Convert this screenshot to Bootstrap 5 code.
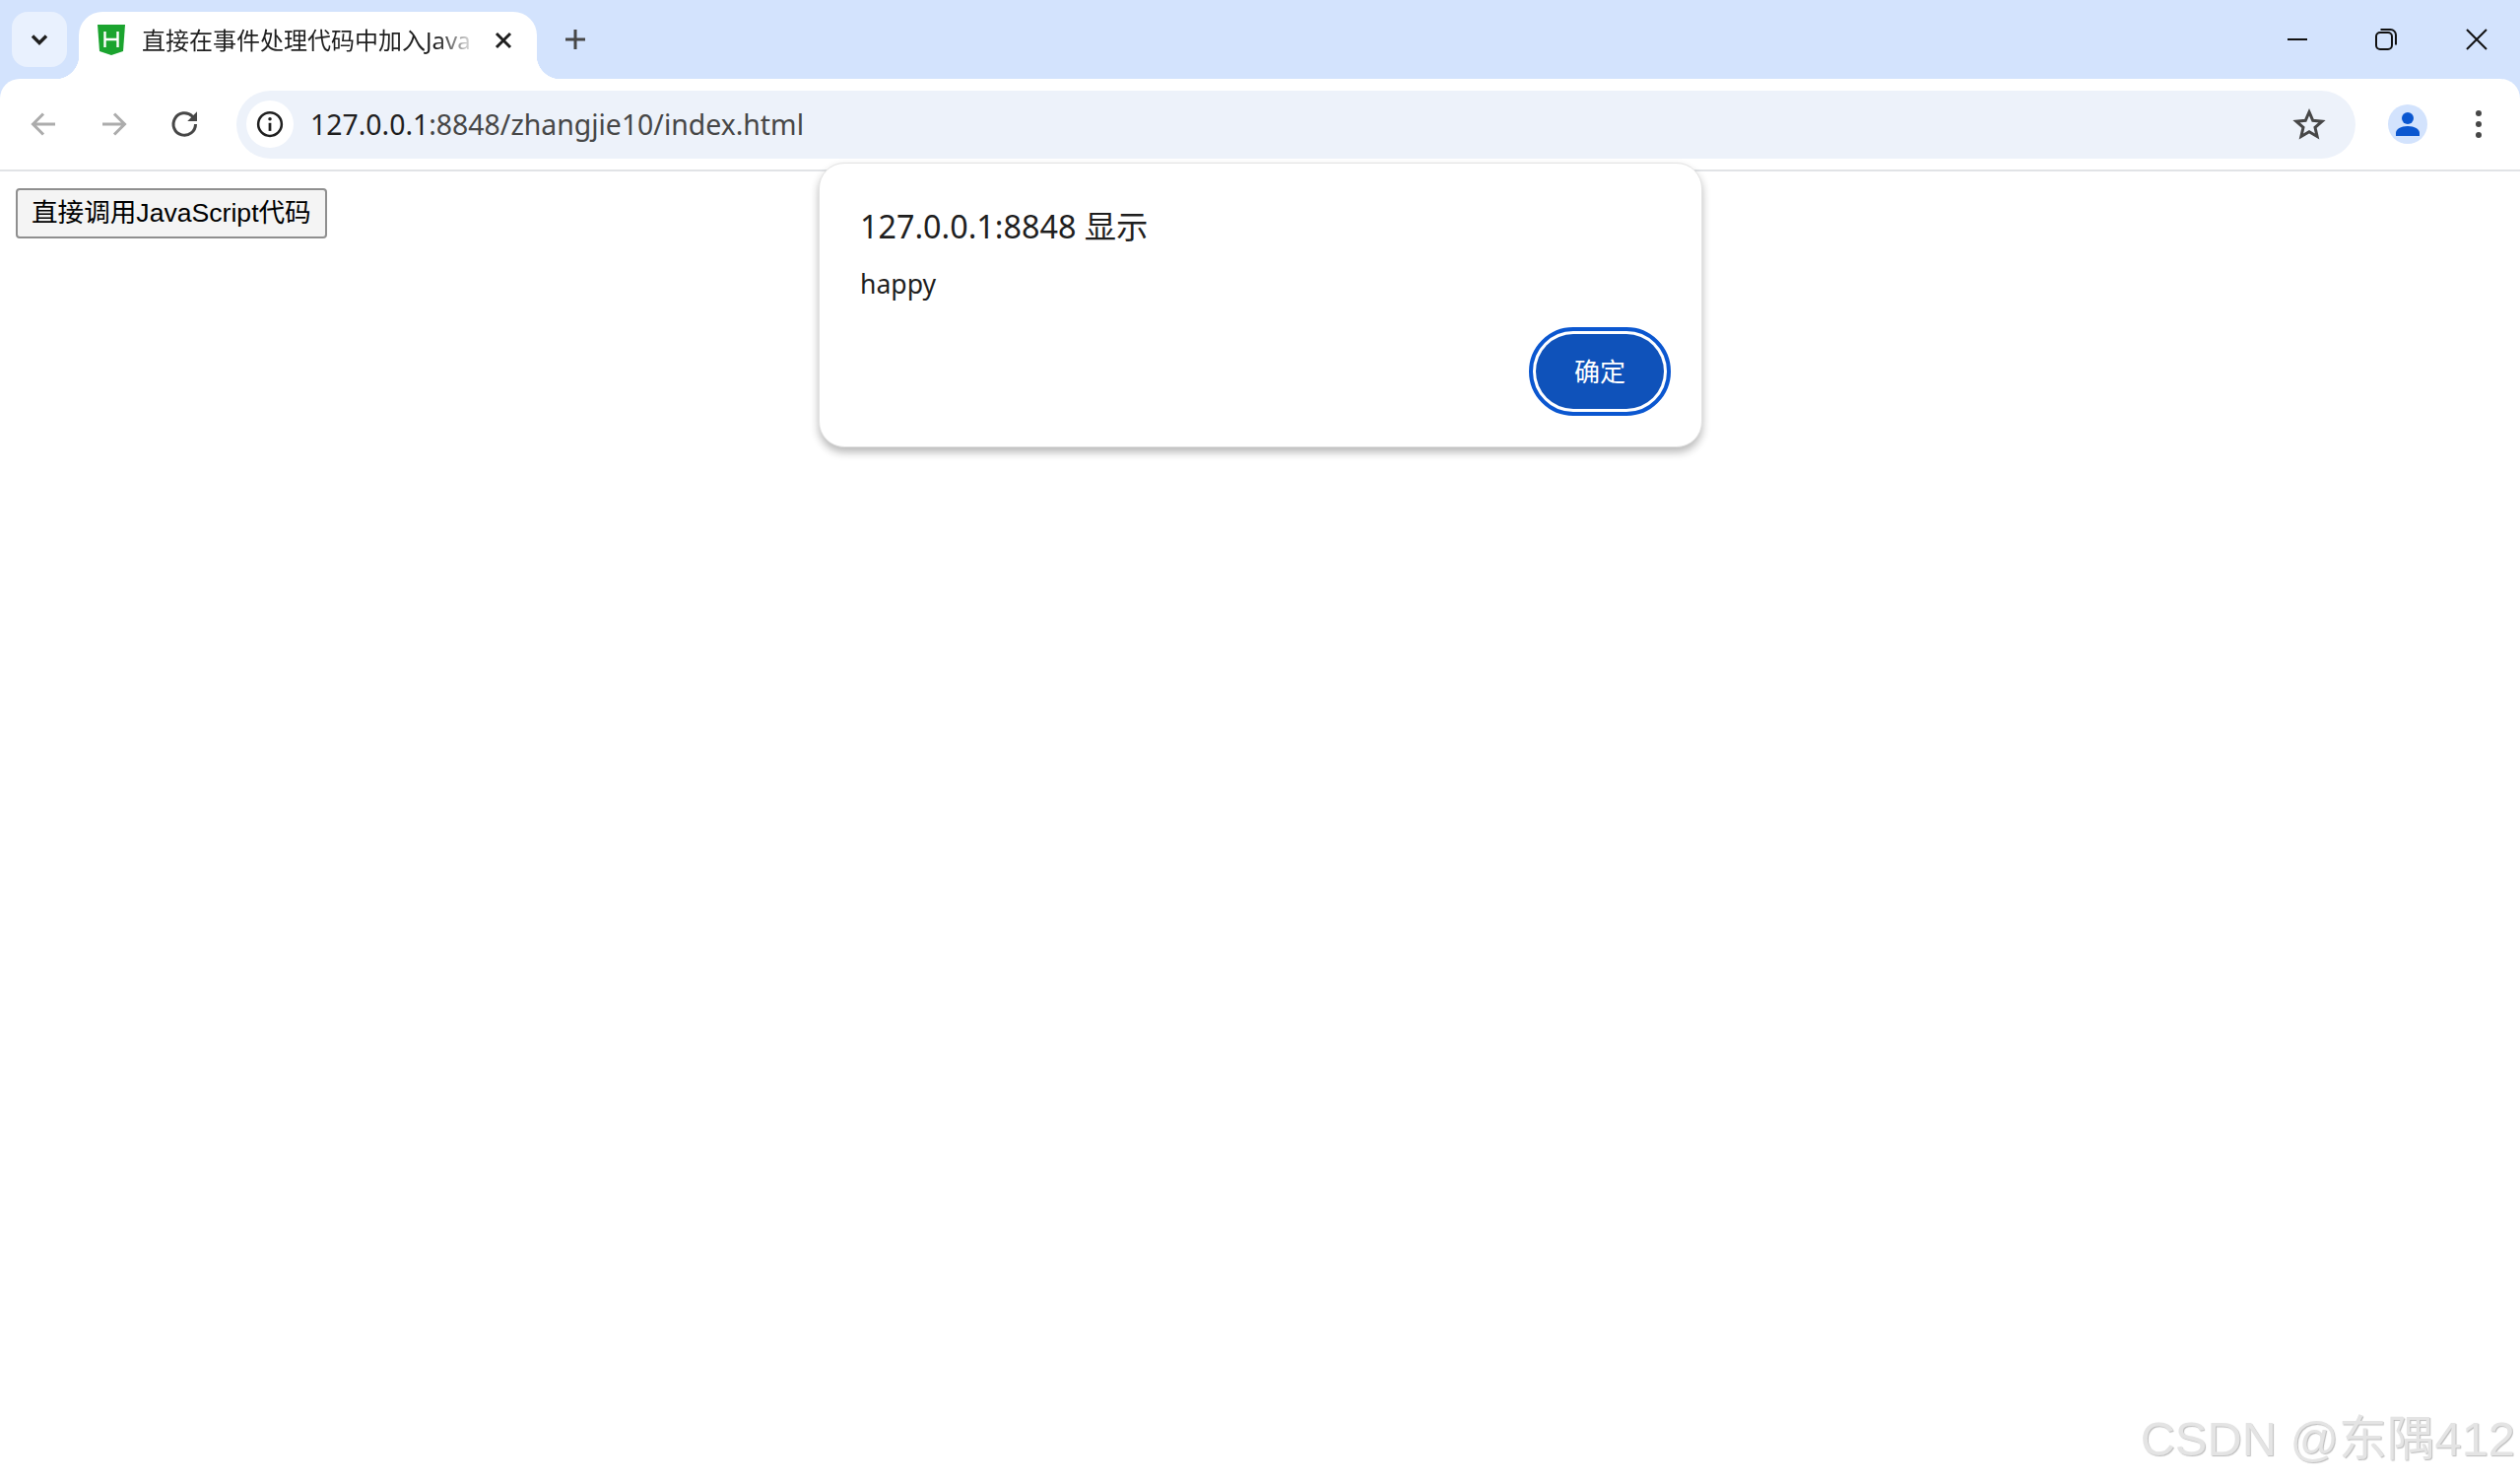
<!DOCTYPE html>
<html lang="zh-CN">
<head>
  <meta charset="UTF-8">
  <title>直接在事件处理代码中加入JavaScript代码</title>
  <link href="https://cdn.jsdelivr.net/npm/bootstrap@5.3.0/dist/css/bootstrap.min.css" rel="stylesheet">
  <style>
    html, body { height: 100%; }
    body { background: #fff; font-family: "Noto Sans", "Noto Sans CJK SC", sans-serif; overflow: hidden; }
    .page-root { height: 1504px; }
    .tab-strip { height: 80px; background: #d3e3fd; padding-left: 12px; }
    .tab-switch { width: 56px; height: 56px; margin-top: 12px; background: #e9f1fe; border-radius: 16px; }
    .tab-item { width: 465px; height: 68px; margin: 12px 0 0 12px; background: #fff; border-radius: 24px 24px 0 0; padding: 0 0 10px 19px; }
    .tab-item::before, .tab-item::after { content: ""; position: absolute; bottom: 0; width: 24px; height: 24px; }
    .tab-item::before { left: -24px; background: radial-gradient(circle at 0 0, transparent 24px, #fff 24.5px); }
    .tab-item::after { right: -24px; background: radial-gradient(circle at 100% 0, transparent 24px, #fff 24.5px); }
    .tab-title { width: 340px; flex-shrink: 0; margin-left: 17px; font-size: 24px; line-height: 32px; color: #1f1f1f; white-space: nowrap; -webkit-mask-image: linear-gradient(to right, #000 88%, transparent); mask-image: linear-gradient(to right, #000 88%, transparent); }
    .tab-close { margin-left: 17px; }
    .tab-new { width: 48px; height: 48px; margin: 16px 0 0 15px; }
    .win-btn { width: 90px; height: 80px; }
    .win-btn-last { width: 88px; margin-left: 3px; }
    .tool-bar { height: 94px; background: #fff; border-bottom: 2px solid #e1e3e6; padding: 0 6px 0 8px; border-radius: 20px 20px 0 0; }
    .tool-top { background: #d3e3fd; }
    .tool-btn { width: 72px; height: 72px; }
    .omni-box { height: 69px; margin-left: 16px; background: #edf2fa; border-radius: 35px; padding: 0 29px 0 10px; }
    .omni-chip { width: 48px; height: 48px; background: #fff; border-radius: 50%; }
    .omni-url { margin-left: 17px; font-size: 28.4px; line-height: 40px; color: #474747; white-space: nowrap; }
    .omni-host { color: #1f1f1f; }
    .avatar-btn { margin-left: 17px; }
    .avatar-dot { width: 40px; height: 40px; background: #d3e3fd; border-radius: 50%; }
    .page-body { padding: 17px 16px; }
    .plain-btn { height: 51px; padding: 0 14px; background: #f4f4f4; border: 2px solid #8f8f8f; border-radius: 4px; font-family: "Liberation Sans", "Noto Sans CJK SC", sans-serif; font-size: 26.6px; color: #000; }
    .alert-box { position: absolute; left: 831px; top: 165px; width: 897px; padding: 41px 33px 31px 41px; background: #fff; border: 1px solid #e3e3e3; border-radius: 26px; box-shadow: 0 5px 8px rgba(0, 0, 0, .28); }
    .alert-title { font-size: 32.3px; line-height: 44px; color: #1f1f1f; }
    .alert-msg { margin-top: 19px; font-size: 26.6px; line-height: 36px; color: #1f1f1f; }
    .alert-ok { width: 130px; height: 76px; margin: 33px 5px 7px 0; padding: 0; background: #0f52ba; border: 0; border-radius: 38px; outline: 4px solid #0b57d0; outline-offset: 3px; color: #fff; font-size: 26px; }
    .alert-ok:hover { background: #0f52ba; color: #fff; }
    .mark-text { position: absolute; right: 5px; bottom: 14px; font-family: "Liberation Sans", "Noto Sans CJK SC", sans-serif; font-size: 48.8px; line-height: 60px; color: #e4e4e4; text-shadow: 1px 1px 1px #bdbdbd; white-space: nowrap; }
  </style>
</head>
<body>
  <div class="page-root position-relative">
    <div class="tab-strip d-flex align-items-start">
      <div class="tab-switch d-flex align-items-center justify-content-center">
        <svg width="24" height="24" viewBox="0 0 24 24"><path d="M5 8.500l7 7 7-7" fill="none" stroke="#1f1f1f" stroke-width="3.400"/></svg>
      </div>
      <div class="tab-item position-relative d-flex align-items-center">
        <svg width="28" height="32" viewBox="0 0 28 32"><path d="M0 0h28l-2 27-12 4-12-4z" fill="#1ba42f"/><path d="M7.500 7v16M20.500 7v16M7.500 15h13" fill="none" stroke="#fff" stroke-width="2.400"/></svg>
        <div class="tab-title">直接在事件处理代码中加入Java</div>
        <svg class="tab-close" width="20" height="20" viewBox="0 0 20 20"><path d="M3 3l14 14M17 3L3 17" stroke="#1f1f1f" stroke-width="3"/></svg>
      </div>
      <div class="tab-new d-flex align-items-center justify-content-center">
        <svg width="24" height="24" viewBox="0 0 24 24"><path d="M12 2v20M2 12h20" stroke="#474747" stroke-width="3"/></svg>
      </div>
      <div class="d-flex ms-auto">
        <div class="win-btn d-flex align-items-center justify-content-center">
          <svg width="24" height="24" viewBox="0 0 24 24"><path d="M2 12h20" stroke="#111" stroke-width="2"/></svg>
        </div>
        <div class="win-btn d-flex align-items-center justify-content-center">
          <svg width="24" height="24" viewBox="0 0 24 24"><rect x="2" y="5" width="16" height="17" rx="4" fill="none" stroke="#111" stroke-width="2"/><path d="M6.500 2h10a5.500 5.500 0 0 1 5.500 5.500v10" fill="none" stroke="#111" stroke-width="2"/></svg>
        </div>
        <div class="win-btn win-btn-last d-flex align-items-center justify-content-center">
          <svg width="24" height="24" viewBox="0 0 24 24"><path d="M2 2l20 20M22 2L2 22" stroke="#111" stroke-width="2"/></svg>
        </div>
      </div>
    </div>
    <div class="tool-top">
      <div class="tool-bar d-flex align-items-center">
        <div class="tool-btn d-flex align-items-center justify-content-center">
          <svg width="36" height="36" viewBox="0 0 24 24"><path d="M20 12H5M12 5l-7 7 7 7" fill="none" stroke="#acacac" stroke-width="2"/></svg>
        </div>
        <div class="tool-btn d-flex align-items-center justify-content-center">
          <svg width="36" height="36" viewBox="0 0 24 24"><path d="M4 12h15M12 5l7 7-7 7" fill="none" stroke="#acacac" stroke-width="2"/></svg>
        </div>
        <div class="tool-btn d-flex align-items-center justify-content-center">
          <svg width="36" height="36" viewBox="0 0 24 24"><path d="M19 12a7.500 7.500 0 1 1-2.200-5.300L19 9" fill="none" stroke="#474747" stroke-width="2"/><path d="M20 3.500V10h-6.500z" fill="#474747"/></svg>
        </div>
        <div class="omni-box flex-grow-1 d-flex align-items-center">
          <div class="omni-chip d-flex align-items-center justify-content-center">
            <svg width="30" height="30" viewBox="0 0 24 24"><circle cx="12" cy="12" r="9.500" fill="none" stroke="#1f1f1f" stroke-width="2"/><path d="M12 11v6.500" stroke="#1f1f1f" stroke-width="2.200"/><circle cx="12" cy="7.700" r="1.400" fill="#1f1f1f"/></svg>
          </div>
          <div class="omni-url"><span class="omni-host">127.0.0.1</span>:8848/zhangjie10/index.html</div>
          <svg class="ms-auto" width="36" height="36" viewBox="0 0 24 24"><path d="M12 3.800l2.500 5.700 6.200.6-4.700 4.100 1.400 6.100-5.400-3.200-5.400 3.200 1.400-6.100-4.700-4.100 6.200-.6z" fill="none" stroke="#474747" stroke-width="2"/></svg>
        </div>
        <div class="tool-btn avatar-btn d-flex align-items-center justify-content-center">
          <div class="avatar-dot d-flex align-items-center justify-content-center">
            <svg width="26" height="26" viewBox="0 0 26 26"><circle cx="13" cy="7" r="6" fill="#0b57d0"/><path d="M1 25v-3c0-4 5-7 12-7s12 3 12 7v3z" fill="#0b57d0"/></svg>
          </div>
        </div>
        <div class="tool-btn d-flex align-items-center justify-content-center">
          <svg width="8" height="30" viewBox="0 0 8 30"><circle cx="4" cy="4" r="3" fill="#474747"/><circle cx="4" cy="15" r="3" fill="#474747"/><circle cx="4" cy="26" r="3" fill="#474747"/></svg>
        </div>
      </div>
    </div>
    <div class="page-body">
      <button type="button" class="plain-btn">直接调用JavaScript代码</button>
    </div>
    <div class="alert-box d-flex flex-column">
      <div class="alert-title">127.0.0.1:8848 显示</div>
      <div class="alert-msg">happy</div>
      <div class="d-flex justify-content-end">
        <button type="button" class="btn alert-ok">确定</button>
      </div>
    </div>
    <div class="mark-text">CSDN @东隅412</div>
  </div>
  <script src="https://cdn.jsdelivr.net/npm/bootstrap@5.3.0/dist/js/bootstrap.bundle.min.js"></script>
</body>
</html>
